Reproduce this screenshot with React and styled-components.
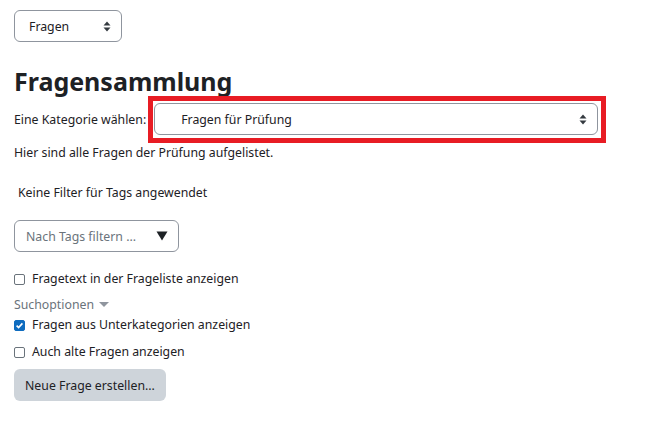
import React from 'react';
import styled, { createGlobalStyle } from 'styled-components';

const GlobalStyle = createGlobalStyle`
    body {
        margin: 0;
        background: #ffffff;
        font-family: "Noto Sans", "Open Sans", sans-serif;
        font-size: 12.3px;
        color: #1d2125;
    }
`;

const Page = styled.div`
    display: flex;
    flex-direction: column;
    align-items: flex-start;
    padding: 10px 14px;
`;

// select box
const SelectBox = styled.div`
    display: flex;
    align-items: center;
    justify-content: space-between;
    box-sizing: border-box;
    width: ${props => props.width}px;
    height: 32px;
    margin-top: ${props => props.top || 0}px;
    padding: 0 10px 0 ${props => props.padLeft}px;
    border: 1px solid #8f959e;
    border-radius: 6px;
    background: #fff;
    color: ${props => props.muted ? '#6a737b' : '#1d2125'};
`;

const Heading = styled.h2`
    margin: 24px 0 0;
    font-size: 25px;
    font-weight: 700;
    line-height: 30px;
    color: #1d2125;
`;

const CategoryRow = styled.div`
    display: flex;
    align-items: center;
`;

// rote Markierung um die Kategorie-Auswahl
const Highlight = styled.div`
    display: flex;
    margin-left: 2px;
    padding: 2px 3px 3px 1px;
    border: 5px solid #e81c24;
`;

const Text = styled.div`
    margin-top: ${props => props.top || 0}px;
    padding-left: ${props => props.indent || 0}px;
    line-height: 20px;
`;

const CheckRow = styled.label`
    display: flex;
    align-items: center;
    gap: 7px;
    margin-top: ${props => props.top}px;
    line-height: 20px;
`;

const Box = styled.span`
    display: flex;
    align-items: center;
    justify-content: center;
    box-sizing: border-box;
    width: 11px;
    height: 11px;
    border-radius: 2px;
    border: 1px solid ${props => props.checked ? '#0f6cbf' : '#6a737b'};
    background: ${props => props.checked ? '#0f6cbf' : '#fff'};
`;

const Toggle = styled.div`
    display: flex;
    align-items: center;
    gap: 5px;
    margin-top: 6px;
    color: #6a737b;
    line-height: 20px;
`;

const Button = styled.button`
    margin-top: 7px;
    height: 32px;
    padding: 0 11px;
    border: none;
    border-radius: 6px;
    background: #ced4da;
    color: #1d2125;
    font-family: inherit;
    font-size: 12.3px;
`;

function UpDown() {
    return (
        <svg width="8" height="11" viewBox="0 0 8 11">
            <path d="M4 0.5 L7.5 4.5 H0.5 Z M4 10.5 L7.5 6.5 H0.5 Z" fill="#343a40" />
        </svg>
    );
}

function Check({ checked }) {
    return (
        <Box checked={checked}>
            {checked && (
                <svg width="9" height="9" viewBox="0 0 9 9">
                    <path d="M1.6 4.6 L3.6 6.6 L7.4 2.4" fill="none" stroke="#fff" strokeWidth="1.6" />
                </svg>
            )}
        </Box>
    );
}

export default function App() {
    return (
        <>
            <GlobalStyle />
            <Page>
                <SelectBox width={108} padLeft={14}>
                    Fragen
                    <UpDown />
                </SelectBox>
                <Heading>Fragensammlung</Heading>
                <CategoryRow>
                    Eine Kategorie wählen:
                    <Highlight>
                        <SelectBox width={444} padLeft={26}>
                            Fragen für Prüfung
                            <UpDown />
                        </SelectBox>
                    </Highlight>
                </CategoryRow>
                <Text>Hier sind alle Fragen der Prüfung aufgelistet.</Text>
                <Text top={20} indent={4}>Keine Filter für Tags angewendet</Text>
                <SelectBox width={165} padLeft={11} muted top={17}>
                    Nach Tags filtern ...
                    <svg width="12" height="10" viewBox="0 0 12 10">
                        <path d="M0.5 0.5 H11.5 L6 9.5 Z" fill="#1d2125" />
                    </svg>
                </SelectBox>
                <CheckRow top={17}>
                    <Check />
                    Fragetext in der Frageliste anzeigen
                </CheckRow>
                <Toggle>
                    Suchoptionen
                    <svg width="10" height="6" viewBox="0 0 10 6">
                        <path d="M0 0 H10 L5 5 Z" fill="#8f959e" />
                    </svg>
                </Toggle>
                <CheckRow top={0}>
                    <Check checked />
                    Fragen aus Unterkategorien anzeigen
                </CheckRow>
                <CheckRow top={7}>
                    <Check />
                    Auch alte Fragen anzeigen
                </CheckRow>
                <Button>Neue Frage erstellen...</Button>
            </Page>
        </>
    );
}
